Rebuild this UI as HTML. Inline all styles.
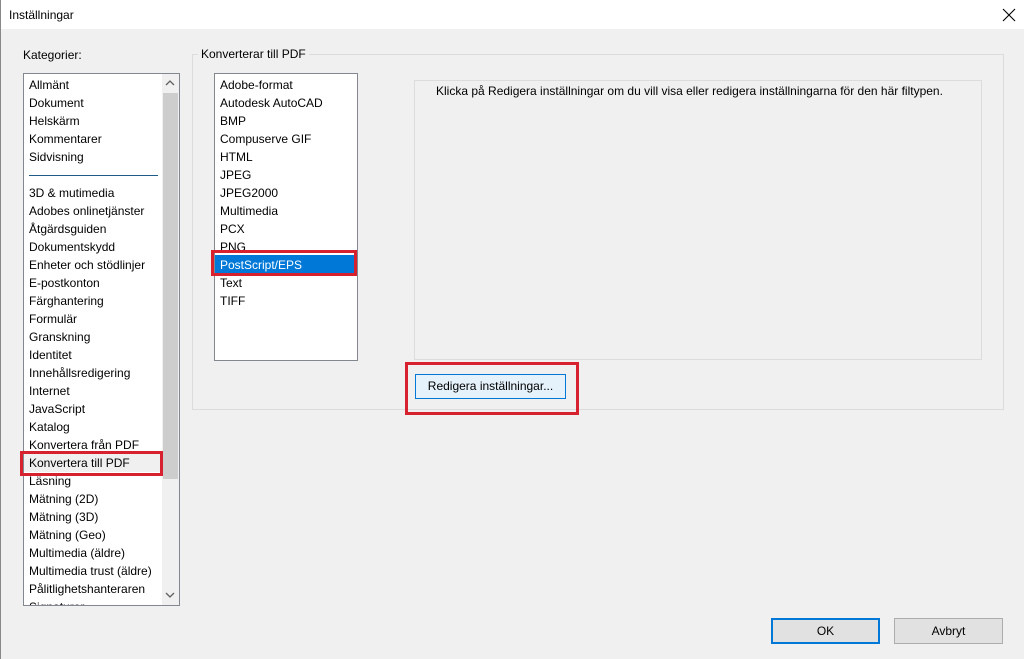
<!DOCTYPE html>
<html><head><meta charset="utf-8"><style>
*{margin:0;padding:0;box-sizing:border-box}
body{width:1024px;height:659px;background:#f0f0f0;font-family:"Liberation Sans",sans-serif;font-size:12px;color:#000;position:relative;overflow:hidden}
.a{position:absolute}
.t{position:absolute;white-space:nowrap;line-height:18px}
.list .t{left:5px}
</style></head><body>
<div class="a" style="left:0;top:0;width:1024px;height:29px;background:#fff"></div>
<div class="a" style="left:0;top:0;width:1px;height:659px;background:#888"></div>
<div class="t" style="left:9px;top:6px">Inställningar</div>
<svg class="a" style="left:1002px;top:8px" width="14" height="14"><path d="M1 1L13 13M13 1L1 13" stroke="#000" stroke-width="1.1"/></svg>

<div class="t" style="left:23px;top:46px">Kategorier:</div>
<div class="a list" style="left:23px;top:73px;width:157px;height:533px;background:#fff;border:1px solid #828790;overflow:hidden">
<div class="a" style="left:138px;top:0;width:17px;height:531px;background:#f0f0f0"></div>
<div class="a" style="left:139px;top:19px;width:15px;height:386px;background:#cdcdcd"></div>
<svg class="a" style="left:141px;top:5px" width="10" height="8"><path d="M1 6L5 2L9 6" stroke="#606060" fill="none" stroke-width="1.3"/></svg>
<svg class="a" style="left:141px;top:517px" width="10" height="8"><path d="M1 2L5 6L9 2" stroke="#606060" fill="none" stroke-width="1.3"/></svg>
<div class="a" style="left:5px;top:101px;width:129px;height:1px;background:#1e5a8a"></div>
<div class="t" style="top:2px">Allmänt</div>
<div class="t" style="top:20px">Dokument</div>
<div class="t" style="top:38px">Helskärm</div>
<div class="t" style="top:56px">Kommentarer</div>
<div class="t" style="top:74px">Sidvisning</div>
<div class="t" style="top:110px">3D &amp; mutimedia</div>
<div class="t" style="top:128px">Adobes onlinetjänster</div>
<div class="t" style="top:146px">Åtgärdsguiden</div>
<div class="t" style="top:164px">Dokumentskydd</div>
<div class="t" style="top:182px">Enheter och stödlinjer</div>
<div class="t" style="top:200px">E-postkonton</div>
<div class="t" style="top:218px">Färghantering</div>
<div class="t" style="top:236px">Formulär</div>
<div class="t" style="top:254px">Granskning</div>
<div class="t" style="top:272px">Identitet</div>
<div class="t" style="top:290px">Innehållsredigering</div>
<div class="t" style="top:308px">Internet</div>
<div class="t" style="top:326px">JavaScript</div>
<div class="t" style="top:344px">Katalog</div>
<div class="t" style="top:362px">Konvertera från PDF</div>
<div class="a" style="left:0;top:379px;width:138px;height:19px;background:#f0f0f0"></div>
<div class="t" style="top:380px">Konvertera till PDF</div>
<div class="t" style="top:398px">Läsning</div>
<div class="t" style="top:416px">Mätning (2D)</div>
<div class="t" style="top:434px">Mätning (3D)</div>
<div class="t" style="top:452px">Mätning (Geo)</div>
<div class="t" style="top:470px">Multimedia (äldre)</div>
<div class="t" style="top:488px">Multimedia trust (äldre)</div>
<div class="t" style="top:506px">Pålitlighetshanteraren</div>
<div class="t" style="top:524px">Signaturer</div>
</div>
<div class="a" style="left:20px;top:451px;width:143px;height:25px;border:3px solid #d8212f"></div>

<div class="a" style="left:192px;top:54px;width:812px;height:356px;border:1px solid #dcdcdc"></div>
<div class="t" style="left:198px;top:45px;background:#f0f0f0;padding:0 3px">Konverterar till PDF</div>

<div class="a list" style="left:214px;top:73px;width:144px;height:288px;background:#fff;border:1px solid #828790">
<div class="t" style="top:2px">Adobe-format</div>
<div class="t" style="top:20px">Autodesk AutoCAD</div>
<div class="t" style="top:38px">BMP</div>
<div class="t" style="top:56px">Compuserve GIF</div>
<div class="t" style="top:74px">HTML</div>
<div class="t" style="top:92px">JPEG</div>
<div class="t" style="top:110px">JPEG2000</div>
<div class="t" style="top:128px">Multimedia</div>
<div class="t" style="top:146px">PCX</div>
<div class="t" style="top:164px">PNG</div>
<div class="a" style="left:0;top:181px;width:142px;height:19px;background:#0078d7"></div>
<div class="t" style="top:182px;color:#fff">PostScript/EPS</div>
<div class="t" style="top:200px">Text</div>
<div class="t" style="top:218px">TIFF</div>
</div>
<div class="a" style="left:211px;top:250px;width:146px;height:26px;border:3px solid #d8212f"></div>

<div class="a" style="left:414px;top:80px;width:568px;height:280px;border:1px solid #dcdcdc"></div>
<div class="t" style="left:436px;top:82px">Klicka på Redigera inställningar om du vill visa eller redigera inställningarna för den här filtypen.</div>

<div class="a" style="left:415px;top:374px;width:151px;height:25px;background:#e5f1fb;border:1px solid #0078d7"></div>
<div class="t" style="left:415px;top:377px;width:151px;text-align:center">Redigera inställningar...</div>
<div class="a" style="left:405px;top:362px;width:174px;height:53px;border:3px solid #d8212f"></div>

<div class="a" style="left:771px;top:618px;width:109px;height:26px;background:#e1e1e1;border:2px solid #0078d7"></div>
<div class="t" style="left:771px;top:622px;width:109px;text-align:center">OK</div>
<div class="a" style="left:894px;top:618px;width:109px;height:26px;background:#e1e1e1;border:1px solid #adadad"></div>
<div class="t" style="left:894px;top:622px;width:109px;text-align:center">Avbryt</div>
</body></html>
